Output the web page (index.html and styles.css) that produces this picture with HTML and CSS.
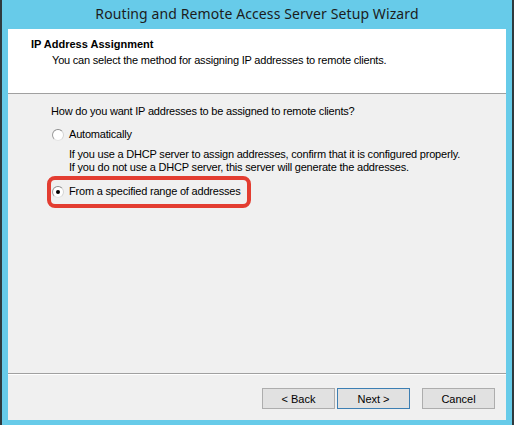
FILE: index.html
```html
<!DOCTYPE html>
<html>
<head>
<meta charset="utf-8">
<link rel="stylesheet" href="styles.css">
</head>
<body>
<div class="window">
  <div class="titlebar">Routing and Remote Access Server Setup Wizard</div>
  <div class="client">
    <div class="header">
      <div class="h-title">IP Address Assignment</div>
      <div class="h-sub">You can select the method for assigning IP addresses to remote clients.</div>
    </div>
    <div class="main">
      <div class="question">How do you want IP addresses to be assigned to remote clients?</div>
      <div class="option opt-auto">
        <span class="radio"></span>
        <span>Automatically</span>
      </div>
      <div class="desc">
        <div>If you use a DHCP server to assign addresses, confirm that it is configured properly.</div>
        <div>If you do not use a DHCP server, this server will generate the addresses.</div>
      </div>
      <div class="highlight">
        <div class="option">
          <span class="radio checked"></span>
          <span>From a specified range of addresses</span>
        </div>
      </div>
    </div>
    <div class="footer">
      <button class="btn">&lt; Back</button>
      <button class="btn default">Next &gt;</button>
      <button class="btn cancel">Cancel</button>
    </div>
  </div>
</div>
</body>
</html>
```
FILE: styles.css
```css
html, body {
  margin: 0;
  padding: 0;
  background: #67cbe9;
}
.window {
  width: 514px;
  height: 425px;
  box-sizing: border-box;
  background: #67cbe9;
  border-left: 2px solid #2f3a3e;
  border-right: 2px solid #2f3a3e;
  padding: 0 6px 5px 6px;
  display: flex;
  flex-direction: column;
}
.titlebar {
  height: 29px;
  line-height: 28px;
  text-align: center;
  font-family: "Noto Sans", "Open Sans", sans-serif;
  font-size: 14px;
  letter-spacing: 0.1px;
  color: #1c1c1c;
}
.client {
  flex: 1;
  background: #f0f0f0;
  display: flex;
  flex-direction: column;
  font-family: "Liberation Sans", Arial, sans-serif;
  font-size: 11px;
  letter-spacing: -0.2px;
  line-height: 13px;
  color: #000;
}
.header {
  background: #fff;
  border-bottom: 1px solid #a0a0a0;
  padding: 9px 0 0 23px;
  box-sizing: content-box;
  height: 55px;
}
.h-title {
  font-weight: bold;
  letter-spacing: 0;
}
.h-sub {
  margin-top: 3px;
  padding-left: 21px;
}
.main {
  flex: 1;
  padding: 11px 0 0 43px;
  border-bottom: 1px solid #a0a0a0;
  box-shadow: 0 1px 0 #ffffff;
}
.option {
  display: flex;
  align-items: center;
  gap: 5px;
  height: 13px;
  margin-left: 1px;
}
.opt-auto {
  margin-top: 10px;
}
.desc {
  margin-top: 7px;
  padding-left: 18px;
}
.radio {
  width: 12px;
  height: 12px;
  box-sizing: border-box;
  border-radius: 50%;
  border: 1px solid;
  border-color: #8d8d8d #d4d4d4 #e4e4e4 #9a9a9a;
  background: #fff;
  display: flex;
  align-items: center;
  justify-content: center;
  flex: none;
}
.radio.checked::after {
  content: "";
  width: 4px;
  height: 4px;
  border-radius: 50%;
  background: #000;
}
.highlight {
  display: inline-flex;
  margin: 2px 0 0 -4px;
  border: 4px solid #e33d31;
  border-radius: 8px;
  padding: 5px 6px 6px 0;
}
.highlight .option {
  margin-left: 1px;
}
.footer {
  height: 45px;
  margin-top: 1px;
  display: flex;
  align-items: flex-start;
  justify-content: flex-end;
  padding: 13px 11px 0 0;
  box-sizing: border-box;
}
.btn {
  width: 73px;
  height: 21px;
  margin: 0;
  padding: 0;
  border: 1px solid #adadad;
  background: #e1e1e1;
  font-family: "Liberation Sans", Arial, sans-serif;
  font-size: 11px;
  color: #000;
}
.btn.default {
  margin-left: 2px;
  border-color: #3d7fb3;
}
.btn.cancel {
  margin-left: 12px;
}
```
